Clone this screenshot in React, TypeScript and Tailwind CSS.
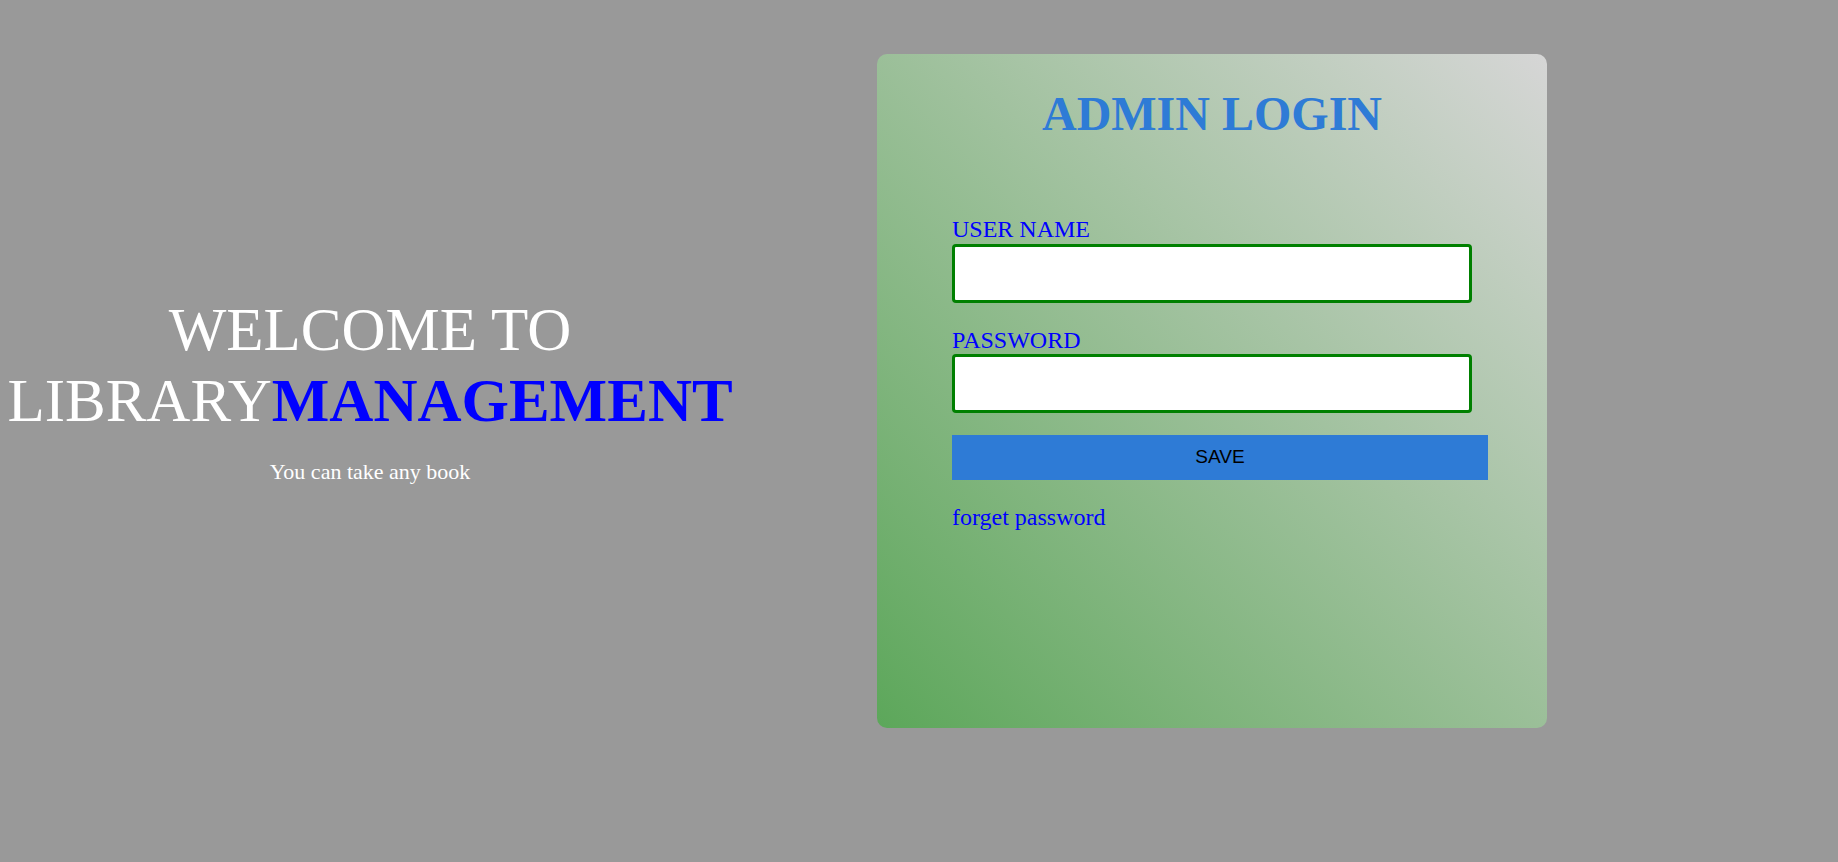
import React from "react";

const serif = "font-['Liberation_Serif','Times_New_Roman',serif]";

const App: React.FC = () => {
  return (
    <div className={`min-h-[862px] w-full bg-[#999999] ${serif}`}>
      <div className="flex items-center pt-[54px]">
        {/* left welcome text */}
        <div className="w-[740px] text-center">
          <h1 className="text-[61px] leading-[71px] text-white font-normal">
            WELCOME TO
            <br />
            LIBRARY<span className="font-bold text-[#0000ff]">MANAGEMENT</span>
          </h1>
          <p className="mt-[19px] text-[22px] text-white">You can take any book</p>
        </div>

        {/* login card */}
        <div className="ml-[137px] h-[674px] w-[670px] rounded-[10px] bg-linear-to-tr from-[#5ca75a] to-[#d6d6d6]">
          <h2 className="mt-[32px] text-center text-[48px] leading-[55px] font-bold text-[#2e7bd6]">
            ADMIN LOGIN
          </h2>
          <form className="mt-[75px] pl-[75px]" onSubmit={(e) => e.preventDefault()}>
            <label className="block text-[24px] leading-[27.6px] text-[#0000ff]">USER NAME</label>
            <input
              type="text"
              className="block h-[59px] w-[520px] rounded-[4px] border-[3px] border-[#008000] bg-white px-2 outline-none"
            />
            <label className="mt-[24px] block text-[24px] leading-[27.6px] text-[#0000ff]">PASSWORD</label>
            <input
              type="password"
              className="block h-[59px] w-[520px] rounded-[4px] border-[3px] border-[#008000] bg-white px-2 outline-none"
            />
            <button
              type="submit"
              className="mt-[22px] block h-[45px] w-[536px] bg-[#2e7bd6] font-['Liberation_Sans',Arial,sans-serif] text-[19px] text-black"
            >
              SAVE
            </button>
            <a href="#" className="mt-[24px] block text-[24px] leading-[27.6px] text-[#0000ff]">
              forget password
            </a>
          </form>
        </div>
      </div>
    </div>
  );
};

export default App;
